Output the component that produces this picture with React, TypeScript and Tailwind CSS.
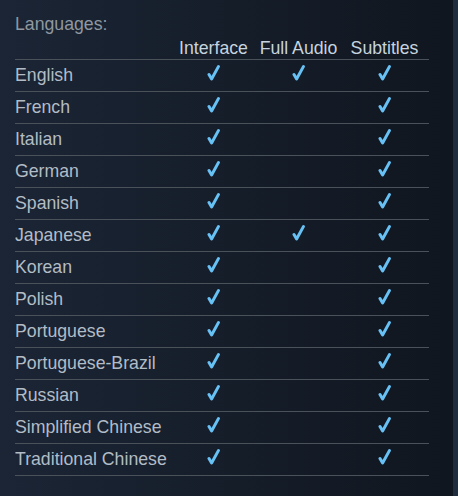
import React from "react";

const rows: [string, boolean, boolean, boolean][] = [
  ["English", true, true, true],
  ["French", true, false, true],
  ["Italian", true, false, true],
  ["German", true, false, true],
  ["Spanish", true, false, true],
  ["Japanese", true, true, true],
  ["Korean", true, false, true],
  ["Polish", true, false, true],
  ["Portuguese", true, false, true],
  ["Portuguese-Brazil", true, false, true],
  ["Russian", true, false, true],
  ["Simplified Chinese", true, false, true],
  ["Traditional Chinese", true, false, true],
];

function Check() {
  return (
    <svg width="13" height="16" viewBox="0 0 13 16" className="block">
      <path
        d="M2 9.6 L4.6 14 L11.4 1.6"
        fill="none"
        stroke="#67c1f5"
        strokeWidth="3"
        strokeLinecap="round"
        strokeLinejoin="round"
      />
    </svg>
  );
}

export default function App() {
  return (
    <div
      className="flex h-[496px] w-full bg-gradient-to-r from-[#1b2535] to-[#10161f]"
      style={{ fontFamily: '"Liberation Sans", Arial, sans-serif' }}
    >
      <div className="flex-1 pl-[15px] pr-[24px] pt-[14px]">
        <div className="text-[17.7px] leading-[20px] text-[#8f98a0]">Languages:</div>
        <div className="mt-[4px] grid grid-cols-[159px_79px_91px_81px_4px] border-b border-[#4b5158] pb-[1px] text-[17.7px] leading-[20px] text-[#c6d4df]">
          <div />
          <div className="text-center">Interface</div>
          <div className="text-center">Full Audio</div>
          <div className="text-center">Subtitles</div>
          <div />
        </div>
        {rows.map(([name, a, b, c]) => (
          <div
            key={name}
            className="grid h-[32px] grid-cols-[159px_79px_91px_81px_4px] items-center border-b border-[#4b5158] pb-[2px] text-[17.7px] text-[#b2bcc6]"
          >
            <div className="leading-[20px]">{name}</div>
            <div className="mb-[4px] flex justify-center">{a && <Check />}</div>
            <div className="mb-[4px] flex justify-center">{b && <Check />}</div>
            <div className="mb-[4px] flex justify-center">{c && <Check />}</div>
            <div />
          </div>
        ))}
      </div>
      <div className="w-[5px] bg-[#212d3e]" />
    </div>
  );
}
